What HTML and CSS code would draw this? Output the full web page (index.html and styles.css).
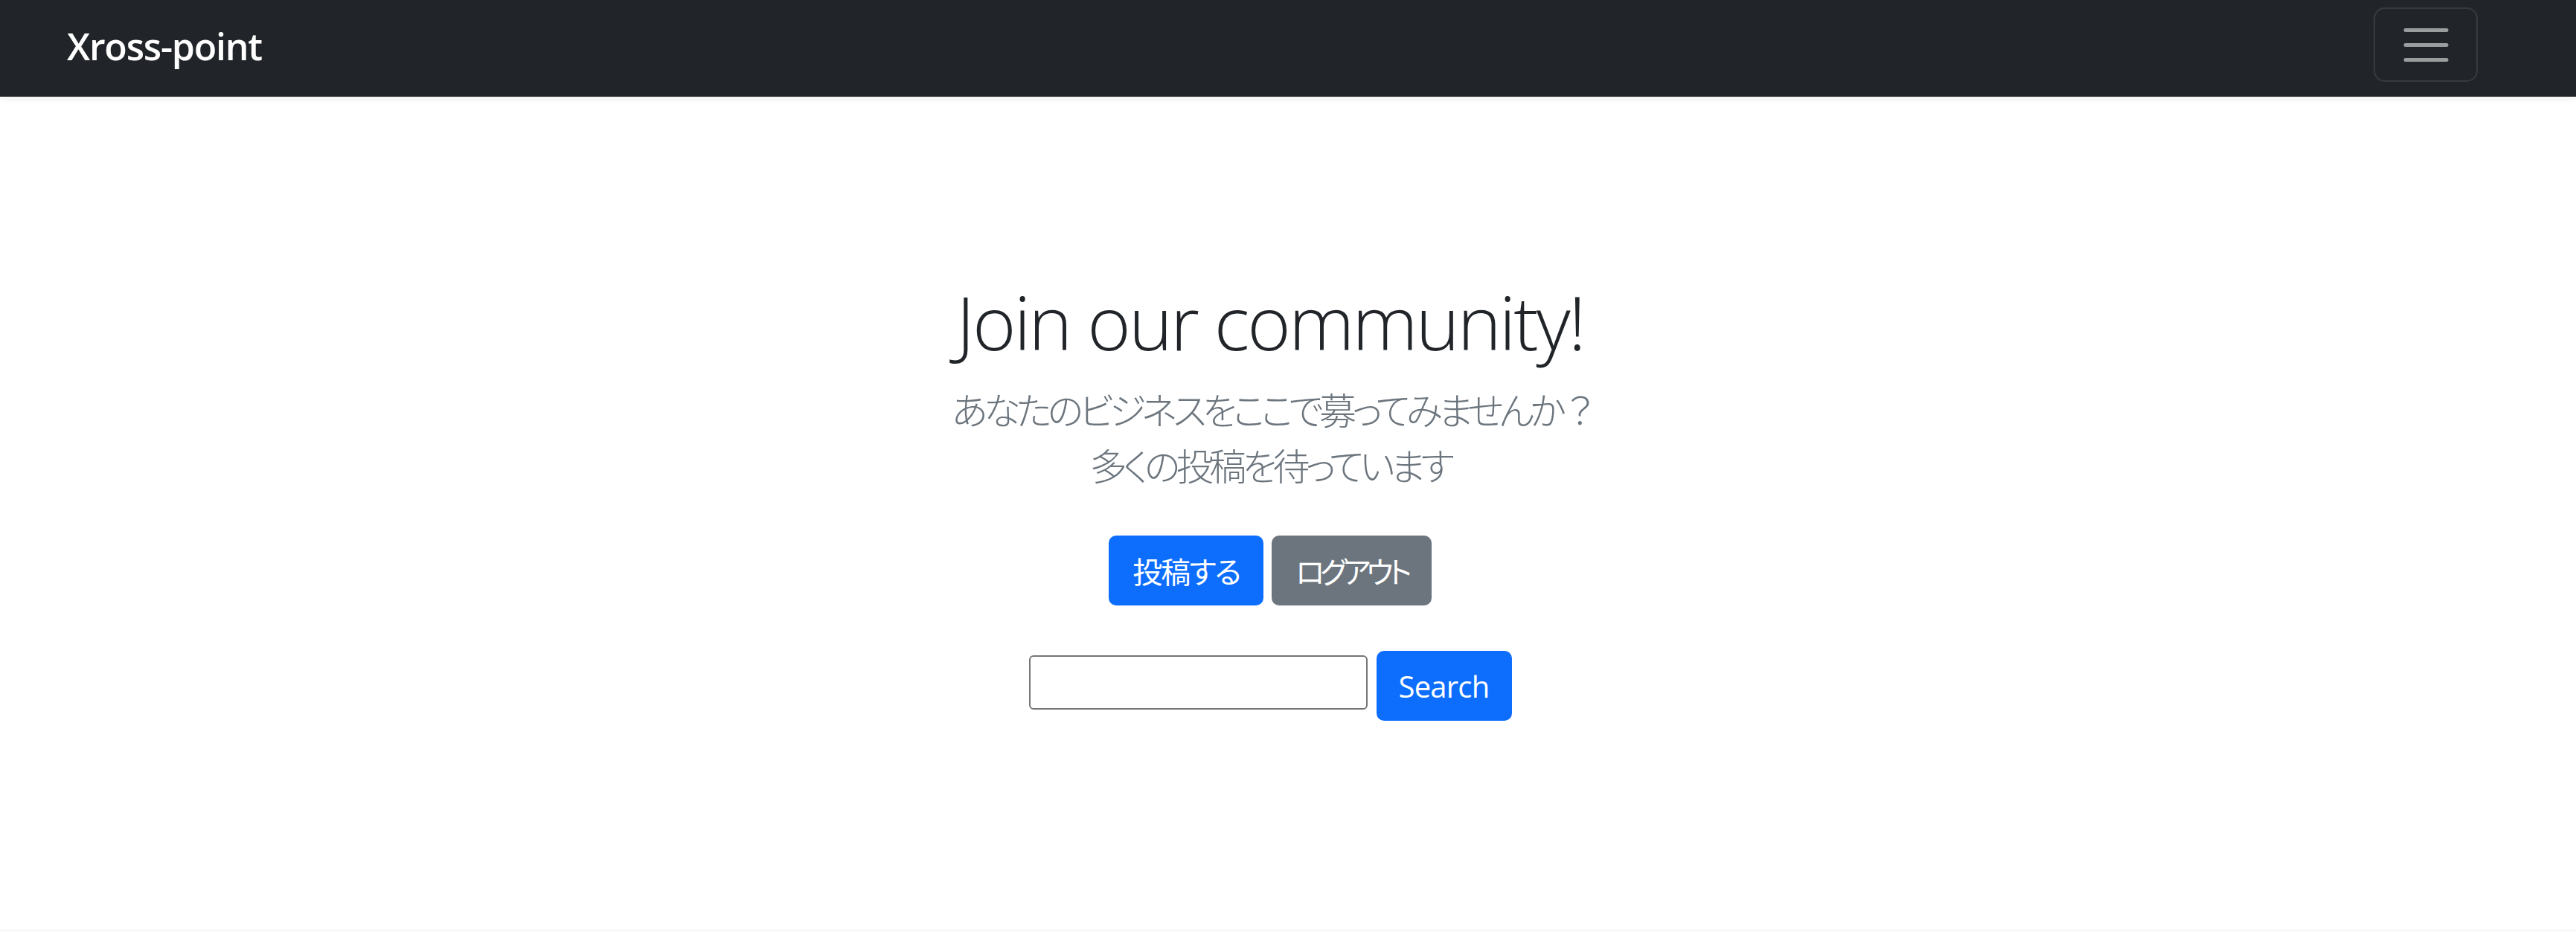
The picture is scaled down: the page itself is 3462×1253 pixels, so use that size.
FILE: index.html
```html
<!DOCTYPE html>
<html lang="ja">
<head>
<meta charset="utf-8">
<title>Xross-point</title>
<link rel="stylesheet" href="styles.css">
</head>
<body>
<header class="navbar">
  <a class="brand" href="#">Xross-point</a>
  <button class="toggler" type="button" aria-label="Toggle navigation">
    <svg class="toggler-icon" viewBox="0 0 30 30" width="75" height="75">
      <path d="M4 7h22M4 15h22M4 23h22" stroke="rgba(255,255,255,0.55)" stroke-width="2" stroke-linecap="round" fill="none"/>
    </svg>
  </button>
</header>
<main class="hero">
  <h1 class="hero-title">Join our community!</h1>
  <p class="lead">あなたのビジネスをここで募ってみませんか<span class="q">？</span><br>多くの投稿を待っています</p>
  <div class="actions">
    <a class="btn btn-primary" href="#">投稿する</a>
    <a class="btn btn-secondary btn-tight" href="#">ログアウト</a>
  </div>
  <form class="search">
    <input class="search-input" type="text" aria-label="search">
    <button class="btn btn-primary btn-search" type="button">Search</button>
  </form>
</main>
<footer class="footer"></footer>
</body>
</html>
```

FILE: styles.css
```css
html, body {
  margin: 0;
  padding: 0;
}
body {
  background: #ffffff;
  font-family: "Open Sans", "Noto Sans CJK JP", sans-serif;
  color: #212529;
  overflow: hidden;
}
.navbar {
  height: 130px;
  background: #212529;
  display: flex;
  justify-content: space-between;
  align-items: flex-start;
  padding: 0 132px 0 90px;
  box-shadow: 0 3px 10px rgba(0, 0, 0, 0.07);
  position: relative;
  z-index: 1;
}
.brand {
  color: #ffffff;
  text-decoration: none;
  font-family: "Open Sans", sans-serif;
  font-weight: 600;
  font-size: 50px;
  letter-spacing: -1.2px;
  line-height: 1;
  margin-top: 37px;
}
.toggler {
  margin-top: 10px;
  width: 140px;
  height: 100px;
  padding: 0;
  background: transparent;
  border: 2.5px solid rgba(255, 255, 255, 0.1);
  border-radius: 15px;
  display: flex;
  align-items: center;
  justify-content: center;
}
.toggler-icon {
  display: block;
}
.hero {
  height: 1119px;
  box-sizing: border-box;
  padding: 242px 48px 0 0;
  text-align: center;
}
.hero-title {
  margin: 0;
  font-family: "Open Sans", sans-serif;
  font-weight: 300;
  font-size: 100px;
  line-height: 120px;
  letter-spacing: -3px;
  color: #212529;
}
.lead {
  margin: 20px 0 58px;
  font-family: "Noto Sans CJK JP", sans-serif;
  font-weight: 300;
  font-size: 50px;
  line-height: 75px;
  letter-spacing: -5.5px;
  color: #6c757d;
  font-feature-settings: "palt";
}
.lead .q {
  font-feature-settings: normal;
  letter-spacing: -14px;
}
.actions {
  display: flex;
  justify-content: center;
  gap: 11px;
}
.btn {
  display: inline-flex;
  align-items: center;
  justify-content: center;
  box-sizing: border-box;
  height: 94px;
  padding: 0 30px;
  border: 2.5px solid transparent;
  border-radius: 10px;
  font-family: "Noto Sans CJK JP", sans-serif;
  font-size: 40px;
  font-weight: 400;
  letter-spacing: -2px;
  color: #ffffff;
  text-decoration: none;
  font-feature-settings: "palt";
}
.btn-tight {
  letter-spacing: -5.8px;
}
.btn-primary {
  background: #0d6efd;
  border-color: #0d6efd;
}
.btn-secondary {
  background: #6c757d;
  border-color: #6c757d;
}
.search {
  margin-top: 61px;
  display: flex;
  justify-content: center;
  align-items: flex-start;
  gap: 12px;
}
.search-input {
  margin-top: 6px;
  width: 455px;
  height: 73px;
  box-sizing: border-box;
  border: 2.5px solid #767676;
  border-radius: 6px;
  background: #ffffff;
  font-size: 36px;
  padding: 0 10px;
}
.btn-search {
  width: 182px;
  font-family: "Open Sans", sans-serif;
  letter-spacing: -0.8px;
  cursor: pointer;
}
.footer {
  height: 40px;
  background: #f8f9fa;
}
```
